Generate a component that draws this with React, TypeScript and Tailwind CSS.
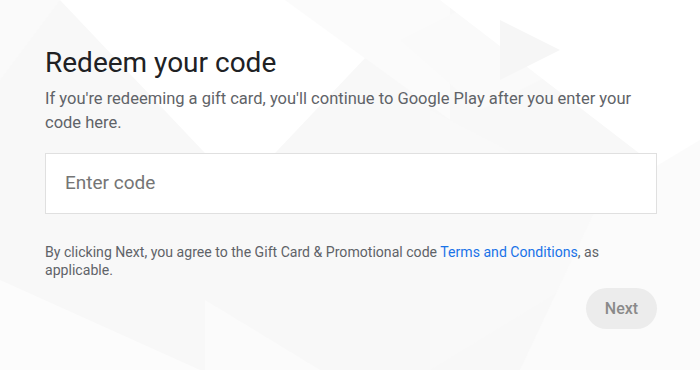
import React from "react"

function Backdrop() {
  // faint play-triangle pattern behind the card
  return (
    <svg
      className="absolute inset-0 h-full w-full"
      viewBox="0 0 700 370"
      preserveAspectRatio="none"
      aria-hidden
    >
      <rect width="700" height="370" fill="#f8f8f8" />
      <polygon points="60,0 420,0 240,190" fill="#ffffff" />
      <polygon points="285,0 450,0 450,120" fill="#fbfbfb" />
      <polygon points="400,40 480,0 560,70 480,110" fill="#fafafa" />
      <polygon points="440,0 700,0 700,200" fill="#ffffff" />
      <polygon points="500,20 560,50 500,80" fill="#f6f6f6" />
      <polygon points="0,280 200,370 0,370" fill="#fcfcfc" />
      <polygon points="205,300 320,370 205,370" fill="#fbfbfb" />
      <polygon points="430,110 660,230 430,370" fill="#f9f9f9" />
      <polygon points="600,200 700,140 700,370 520,370" fill="#fbfbfb" />
      <polygon points="0,0 60,0 0,80" fill="#fafafa" />
    </svg>
  )
}

export default function App() {
  return (
    <div
      className="relative h-[370px] w-[700px] overflow-hidden"
      style={{ fontFamily: "Roboto, 'Noto Sans', sans-serif" }}
    >
      <Backdrop />

      <div className="relative flex w-[657px] flex-col pl-[45px] pt-[45px]">
        <h1 className="text-[28px] leading-9 text-[#202124]">Redeem your code</h1>
        <p className="mt-[6px] text-[16.5px] leading-6 text-[#5f6368]">
          If you're redeeming a gift card, you'll continue to Google Play after you enter your
          code here.
        </p>

        <div className="mt-[18px] flex h-[61px] w-[612px] items-center border border-[#e0e0e0] bg-white px-[19px]">
          <input
            placeholder="Enter code"
            className="w-full bg-transparent text-[19px] text-[#202124] outline-none placeholder:text-[#757575]"
          />
        </div>

        <p className="mt-[29px] pr-[40px] text-[14.1px] leading-[18px] text-[#5f6368]">
          By clicking Next, you agree to the Gift Card &amp; Promotional code{" "}
          <a className="text-[#1a73e8]">Terms and Conditions</a>, as applicable.
        </p>

        <div className="mt-[9px] flex w-[612px] justify-end">
          <button className="h-[41px] w-[71px] rounded-full bg-[#ececec] text-[16px] font-medium text-[#8a8a8a]">
            Next
          </button>
        </div>
      </div>
    </div>
  )
}
